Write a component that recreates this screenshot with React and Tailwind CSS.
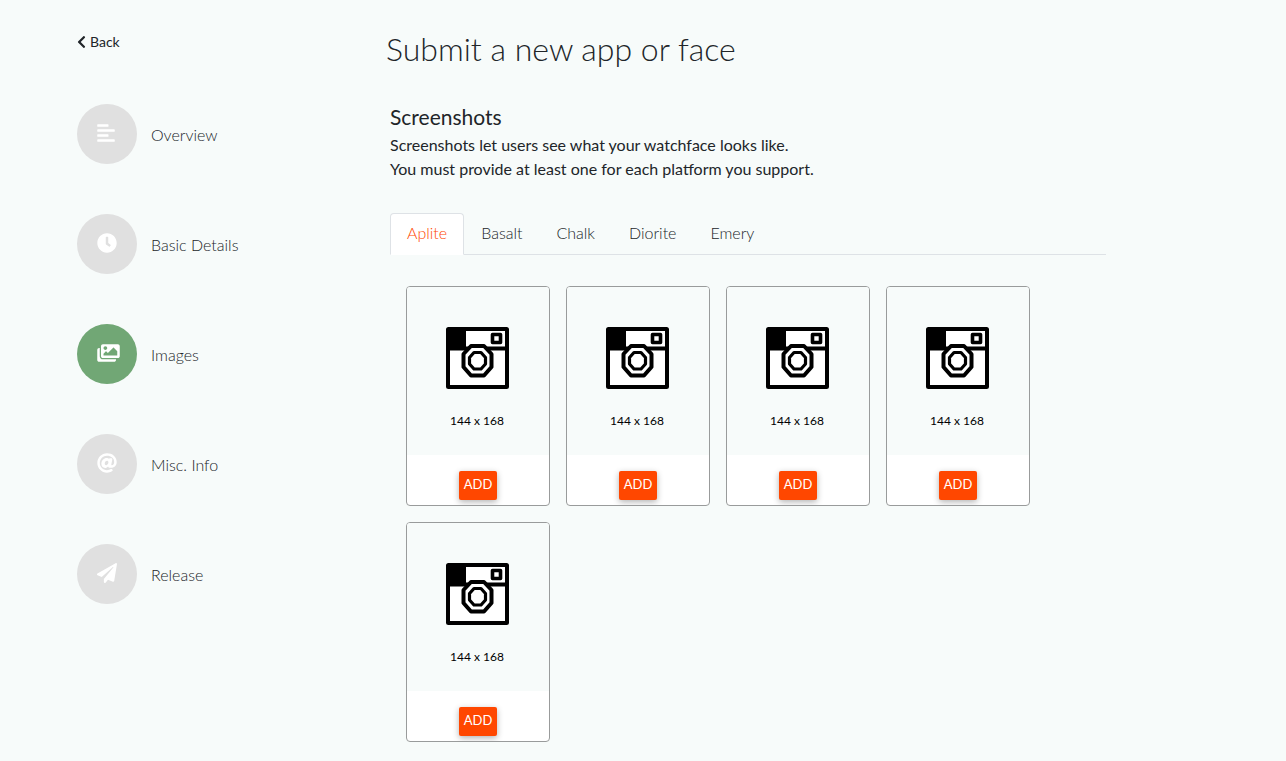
import { useState } from "react";
import { FaAlignLeft, FaAt, FaChevronLeft, FaClock, FaImages, FaPaperPlane } from "react-icons/fa";

const steps = [
  { label: "Overview", Icon: FaAlignLeft, size: "h-5 w-[18px]" },
  { label: "Basic Details", Icon: FaClock, size: "h-5 w-5" },
  { label: "Images", Icon: FaImages, size: "h-5 w-[23px]", current: true },
  { label: "Misc. Info", Icon: FaAt, size: "h-5 w-5" },
  { label: "Release", Icon: FaPaperPlane, size: "h-5 w-5" },
];

const platforms = ["Aplite", "Basalt", "Chalk", "Diorite", "Emery"];

function CameraIcon() {
  return (
    <svg viewBox="0 0 63 62" className="h-[62px] w-[63px]" aria-hidden="true">
      <rect x="2" y="2" width="59" height="58" rx="0.5" fill="#fff" stroke="#000" strokeWidth="4" strokeLinejoin="round" />
      <path d="M2 2H20V23H2Z" fill="#000" />
      <path d="M2 21.5H61" stroke="#000" strokeWidth="4" />
      <rect x="46.5" y="7.5" width="8" height="8" fill="#fff" stroke="#000" strokeWidth="3.6" strokeLinejoin="round" />
      <path d="M25 19H38L45.5 27V40L38 48.5H25L17.5 40V27Z" fill="#fff" stroke="#000" strokeWidth="4" strokeLinejoin="round" />
      <path d="M28 25.5H35L39.5 30.5V37L35 42H28L23.5 37V30.5Z" fill="#fff" stroke="#000" strokeWidth="3.2" strokeLinejoin="round" />
    </svg>
  );
}

function ScreenshotCard() {
  return (
    <li className="flex w-36 flex-col overflow-hidden rounded border border-[#999b9b] bg-white">
      <div className="flex h-[168px] flex-col items-center bg-[#f7fbfa] pt-10 pr-0.5">
        <CameraIcon />
        <p className="mt-[22px] text-xs leading-5 text-black">144 x 168</p>
      </div>
      <div className="flex justify-center pt-4 pb-[5px]">
        <button
          type="button"
          className="h-[29px] rounded-xs bg-[#ff4700] px-[5px] pb-1 text-[13px] leading-5 text-white shadow-[0_2px_6px_rgba(0,0,0,0.3)]"
        >
          ADD
        </button>
      </div>
    </li>
  );
}

export default function App() {
  const [active, setActive] = useState("Aplite");
  return (
    <div className="min-h-screen bg-[#f7fbfa] font-['Lato',sans-serif] text-[#212529]">
      <div className="mx-auto flex max-w-[1140px] px-1 pb-5">
        <nav aria-label="Submission steps" className="w-[309px] shrink-0 pt-8">
          <a href="#back" className="flex w-fit items-center gap-1 text-sm leading-5">
            <FaChevronLeft className="h-3.5 w-[9px]" />
            Back
          </a>
          <ol className="mt-[52px] flex flex-col gap-[50px]">
            {steps.map(({ label, Icon, size, current }) => (
              <li key={label}>
                <a
                  href={"#" + label.toLowerCase().replace(/\W+/g, "-")}
                  aria-current={current ? "step" : undefined}
                  className="flex items-center gap-[14px] font-light text-[#212529]"
                >
                  <span
                    className={
                      "flex size-[60px] items-center rounded-full pb-0.5 pl-5 text-white " +
                      (current ? "bg-[#71a775]" : "bg-[#e0e0e0]")
                    }
                  >
                    <Icon className={size} />
                  </span>
                  <span className="pt-0.5">{label}</span>
                </a>
              </li>
            ))}
          </ol>
        </nav>
        <main className="min-w-0 flex-1 pt-6 pr-[103px]">
          <h1 className="text-[32px] leading-[50px] font-light">Submit a new app or face</h1>
          <section className="mt-7 pl-1">
            <h2 className="text-[21px] leading-[30px]">Screenshots</h2>
            <p className="mt-px">
              Screenshots let users see what your watchface looks like.
              <br />
              You must provide at least one for each platform you support.
            </p>
            <div role="tablist" aria-label="Platforms" className="mt-8 flex border-b border-[#dee2e6]">
              {platforms.map((name) => (
                <button
                  key={name}
                  type="button"
                  role="tab"
                  aria-selected={active === name}
                  onClick={() => setActive(name)}
                  className={
                    "-mb-px rounded-t border px-4 pt-[7px] pb-[9px] font-light " +
                    (active === name
                      ? "border-[#dee2e6] border-b-white bg-white text-[#ff4700]"
                      : "border-transparent")
                  }
                >
                  {name}
                </button>
              ))}
            </div>
            <ul role="tabpanel" aria-label={active} className="flex flex-wrap gap-4 px-4 pt-[31px]">
              {[1, 2, 3, 4, 5].map((slot) => (
                <ScreenshotCard key={slot} />
              ))}
            </ul>
          </section>
        </main>
      </div>
    </div>
  );
}
